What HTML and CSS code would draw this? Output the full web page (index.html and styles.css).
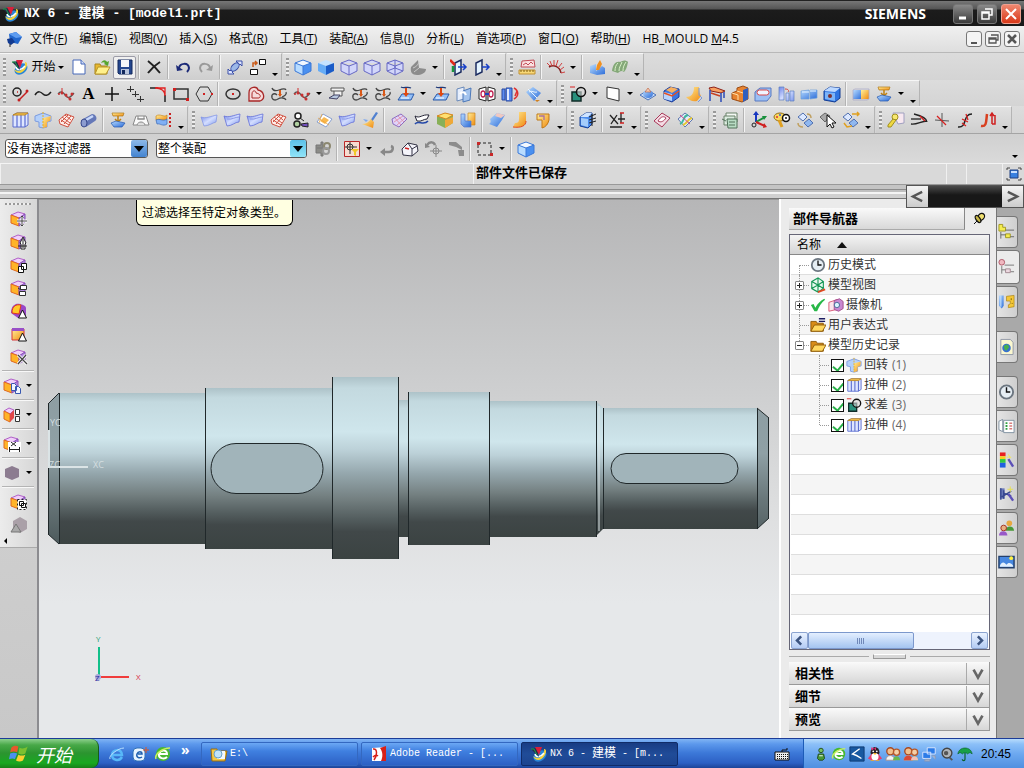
FILE: index.html
```html
<!DOCTYPE html>
<html lang="zh-CN">
<head>
    <meta charset="UTF-8">
    <meta name="viewport" content="width=device-width, initial-scale=1.0">
    <title>NX 6 - 建模 - [model1.prt]</title>
    <link rel="stylesheet" href="styles.css">
</head>
<body>
    <!-- icon sprite -->
    <svg class="sprite" aria-hidden="true">
        <defs>
            <linearGradient id="gBlue" x1="0" y1="0" x2="1" y2="1"><stop offset="0" stop-color="#b8dcff"/><stop offset="1" stop-color="#2c6cd8"/></linearGradient>
            <linearGradient id="gLilac" x1="0" y1="0" x2="1" y2="1"><stop offset="0" stop-color="#6f86e8"/><stop offset=".5" stop-color="#d4deff"/><stop offset="1" stop-color="#7e98ec"/></linearGradient>
            <linearGradient id="gGold" x1="0" y1="0" x2="1" y2="1"><stop offset="0" stop-color="#fff09a"/><stop offset="1" stop-color="#f08a10"/></linearGradient>
            <linearGradient id="gShaft" x1="0" y1="0" x2="0" y2="1">
                <stop offset="0" stop-color="#adc2c8"/><stop offset=".06" stop-color="#c3d9df"/><stop offset=".3" stop-color="#cfe6ec"/>
                <stop offset=".4" stop-color="#bcd1d8"/><stop offset=".53" stop-color="#95a7ad"/><stop offset=".67" stop-color="#748081"/>
                <stop offset=".78" stop-color="#535d5e"/><stop offset=".85" stop-color="#414849"/><stop offset="1" stop-color="#3b4342"/>
            </linearGradient>
            <linearGradient id="gEnd" x1="0" y1="0" x2="0" y2="1"><stop offset="0" stop-color="#8d9da2"/><stop offset=".4" stop-color="#8fa0a5"/><stop offset=".7" stop-color="#69777a"/><stop offset="1" stop-color="#4d5a5c"/></linearGradient>
        </defs>

        <symbol id="nx" viewBox="0 0 18 18"><ellipse cx="10" cy="11" rx="7" ry="5" fill="#2a86d8" transform="rotate(-35 10 11)"/><path d="M3 11c2 5 8 6 12-1 2-4 1-6-1-6 1 3-2 8-6 9-2 0-4-1-5-2z" fill="#f5d33a"/><path d="M5 9c1 4 6 3 9-1" stroke="#fff" fill="none" stroke-width="1.5"/><path d="M1 4l6-1 2 9z" fill="#222a48"/><path d="M5 2l7 0-3 8z" fill="#d81f3a"/><path d="M1 4l3 0 3 6" stroke="#1ba04a" fill="none"/></symbol>
        <symbol id="part" viewBox="0 0 18 18"><path d="M3 4l7-2 6 5-4 7-8-2z" fill="#2266cc"/><path d="M3 4l7-2 6 5-6 1z" fill="#5e9cf0"/><path d="M1 9l5-1 3 4-4 3-3-2z" fill="#123a90"/><path d="M4 14v3" stroke="#222"/></symbol>
        <symbol id="new" viewBox="0 0 18 18"><path d="M3 2h8l4 4v10H3z" fill="#fff" stroke="#4668b8"/><path d="M11 2v4h4" fill="#cfdcf8" stroke="#4668b8"/></symbol>
        <symbol id="open" viewBox="0 0 18 18"><path d="M2 6h5l1 2h6v8H2z" fill="#e8b830" stroke="#a8841c"/><path d="M2 16l3-7h12l-4 7z" fill="#fff08a" stroke="#b8962a"/><path d="M8 5c2-4 5-3 6-1l2-1-1 5-4-2 1-1c-1-1-2-1-4 0z" fill="#55a52c"/></symbol>
        <symbol id="save" viewBox="0 0 18 18"><path d="M2 2h14v14H3l-1-1z" fill="#24468e" stroke="#12285c"/><path d="M5 2h8v7H5z" fill="#f4f6fa"/><path d="M5 11h8v5H5z" fill="#b8c4dc"/><path d="M6 12h3v4H6z" fill="#12285c"/></symbol>
        <symbol id="del" viewBox="0 0 18 18"><path d="M3 3c4 3 8 7 12 12M15 4C10 7 6 11 3 15" stroke="#222" stroke-width="2" fill="none"/></symbol>
        <symbol id="undo" viewBox="0 0 18 18"><path d="M5 10c1-5 9-6 10 0 0 2-1 3-2 4" stroke="#1c2a78" stroke-width="2" fill="none"/><path d="M2 7l1 6 6-1z" fill="#1c2a78"/></symbol>
        <symbol id="redo" viewBox="0 0 18 18"><path d="M13 10c-1-5-9-6-10 0 0 2 1 3 2 4" stroke="#9a9a9a" stroke-width="2" fill="none"/><path d="M16 7l-1 6-6-1z" fill="#9a9a9a"/></symbol>
        <symbol id="orient" viewBox="0 0 18 18"><path d="M2 16V11l2 2 8-8-2-2h6v5l-2-2-8 8 2 2z" fill="#dfe6ff" stroke="#3a4ea8"/><ellipse cx="9" cy="9" rx="3" ry="5" transform="rotate(45 9 9)" fill="#9cb8e8" stroke="#3a4ea8"/></symbol>
        <symbol id="swap" viewBox="0 0 18 18"><path d="M10.5 1.5h6v5h-6zM1.5 11.5h7v5h-7z" fill="#fff" stroke="#111"/><path d="M4 9V5h4M6 3l2 2-2 2" fill="none" stroke="#c85a18" stroke-width="1.5"/></symbol>
        <symbol id="cube" viewBox="0 0 18 18"><path d="M1 5l8-3 8 3-8 3z" fill="#f2f8ff"/><path d="M1 5l8 3v9l-8-4z" fill="#b8dcff"/><path d="M9 8l8-3v8l-8 4z" fill="#4a90f0"/><path d="M1 5l8-3 8 3v8l-8 4-8-4zM1 5l8 3 8-3M9 8v9" fill="none" stroke="#3a78d8"/></symbol>
        <symbol id="cube2" viewBox="0 0 18 18"><path d="M1 5l8-3 8 3-8 3z" fill="#c4e2ff"/><path d="M1 5l8 3v9l-8-4z" fill="#66acf6"/><path d="M9 8l8-3v8l-8 4z" fill="#1a5cc8"/></symbol>
        <symbol id="wire" viewBox="0 0 18 18"><path d="M1 5l8-3 8 3v8l-8 4-8-4zM1 5l8 3 8-3M9 8v9" fill="#d2d6fa" stroke="#6668c4"/></symbol>
        <symbol id="wire2" viewBox="0 0 18 18"><path d="M1 5l8-3 8 3v8l-8 4-8-4zM1 5l8 3 8-3M9 8v9M9 2v8M1 13l8-3 8 3" fill="#d2d6fa" stroke="#6668c4"/></symbol>
        <symbol id="plane" viewBox="0 0 18 18"><path d="M2 9l7-7 1 8 7 1c0 4-5 6-9 6-5 0-7-3-6-8z" fill="#8c8c8c"/><path d="M4 10c3-1 5-3 6-6M10 10l-5 4" stroke="#c8c8c8" fill="none"/></symbol>
        <symbol id="door" viewBox="0 0 18 18"><path d="M3 5l6-3v12l-6 3z" fill="#e4f4ff" stroke="#1c2c60" stroke-width="1.5"/><path d="M9 9h7M13 6l3 3-3 3" stroke="#1840c8" fill="none" stroke-width="1.5"/></symbol>
        <symbol id="door2" viewBox="0 0 18 18"><path d="M5 5l6-3v12l-6 3z" fill="#e4f4ff" stroke="#1c2c60" stroke-width="1.5"/><path d="M8 9h8M13 6l3 3-3 3" stroke="#1840c8" fill="none" stroke-width="1.5"/><path d="M0 2l5 5" stroke="#e02818" stroke-width="2.5"/><path d="M3 8v6" stroke="#18963c" stroke-width="2.5"/></symbol>
        <symbol id="ruler" viewBox="0 0 18 18"><path d="M4 3l12-1 1 7H3z" fill="#fbe0e0" stroke="#c04c58"/><path d="M5 7l3-2 2 2 3-3 2 2" fill="none" stroke="#c04c58"/><path d="M1 12h16v4H1z" fill="#f8d878" stroke="#c09030"/><path d="M3 12v2M6 12v2M9 12v2M12 12v2M15 12v2" stroke="#806010"/></symbol>
        <symbol id="comb" viewBox="0 0 18 18"><path d="M2 9c5-3 11 0 12 6" fill="none" stroke="#802020" stroke-width="1.5"/><path d="M3 8L0 5M5 8L3 3M7 8V2M9 8l2-6M11 10l4-5M13 12l4-3M14 15l4-1" stroke="#d04040"/></symbol>
        <symbol id="bucket" viewBox="0 0 18 18"><path d="M2 8l6-2v7l6-5 3 2v6l-8 1-7-2z" fill="url(#gBlue)"/><path d="M9 7l3-5 2 4-3 6-3 0z" fill="#f09020"/></symbol>
        <symbol id="zebra" viewBox="0 0 18 18"><path d="M1 13c1-7 4-10 8-9 3-2 6-2 8 0-1 5-2 8-4 10-2-2-4-1-6 1-2-1-4-1-6-2z" fill="#84a878"/><path d="M4 13c0-4 1-6 3-8M8 13c0-4 2-6 3-9M12 13c0-4 1-6 3-9" fill="none" stroke="#d8f0c8"/></symbol>

        <symbol id="circline" viewBox="0 0 18 18"><circle cx="6" cy="7" r="4" fill="none" stroke="#222" stroke-width="1.5"/><path d="M6 7h1M8 15l8-8" stroke="#c42020" stroke-width="1.5"/><circle cx="8" cy="15" r="1.5" fill="#c42020"/><circle cx="16" cy="6" r="1.5" fill="#c42020"/></symbol>
        <symbol id="wave" viewBox="0 0 18 18"><path d="M1 10c3-5 6-3 8-1s5 2 8-2" fill="none" stroke="#222" stroke-width="1.5"/></symbol>
        <symbol id="spline" viewBox="0 0 18 18"><path d="M1 9c3-4 5-2 8 2s6-1 8-3" fill="none" stroke="#555" stroke-width="1.3"/><path d="M5 3v5M9 11l4 3" stroke="#d03030"/><g fill="#c83030"><circle cx="5" cy="8" r="1.5"/><circle cx="9" cy="10" r="1.5"/><circle cx="15" cy="9" r="1.5"/><circle cx="13" cy="14" r="1.5"/><circle cx="2" cy="9" r="1"/></g></symbol>
        <symbol id="plus" viewBox="0 0 18 18"><path d="M9 2v14M2 9h14" stroke="#111" stroke-width="1.5"/></symbol>
        <symbol id="pluses" viewBox="0 0 18 18"><path d="M4.5 1v6M1 4.5h7M9.5 6v6M6 9.5h7M14.5 11v6M11 14.5h7" stroke="#333"/></symbol>
        <symbol id="fillet" viewBox="0 0 18 18"><path d="M1 3h6M16 10v7" stroke="#222" stroke-width="1.5"/><path d="M6 3c6 0 10 3 10 8M7 3h9v7" stroke="#e02020" fill="none" stroke-width="1.3"/></symbol>
        <symbol id="rect" viewBox="0 0 18 18"><path d="M2 4h14v10H2z" fill="none" stroke="#333" stroke-width="1.5"/><path d="M1 3h3v3H1zM14 13h3v3h-3z" fill="#d02020"/></symbol>
        <symbol id="hex" viewBox="0 0 18 18"><path d="M5 2h8l4 7-4 7H5L1 9z" fill="none" stroke="#333"/><path d="M8 8h2v2H8zM16 8h2v2h-2z" fill="#d02020"/></symbol>
        <symbol id="ellipse" viewBox="0 0 18 18"><ellipse cx="9" cy="9" rx="7" ry="5" fill="none" stroke="#333" stroke-width="1.5"/><path d="M8 8h2v2H8z" fill="#d02020"/></symbol>
        <symbol id="offset" viewBox="0 0 18 18"><path d="M2 15V8c0-7 8-7 9-3 6 1 8 9 2 11H2z" fill="#f6dada" stroke="#a82828" stroke-width="1.3"/><path d="M5 13V9c0-4 4-4 4-1 5 1 5 4 3 5z" fill="none" stroke="#a82828"/></symbol>
        <symbol id="hook" viewBox="0 0 18 18"><path d="M2 3c1 3 4 3 7 2s6-2 7 0M2 10c-1 5 3 6 6 4s7-1 8 1" fill="none" stroke="#444" stroke-width="1.3"/><path d="M2 10c2-2 4-1 5 0M12 12c3-1 5-3 4-5" fill="none" stroke="#444" stroke-width="1.3"/><path d="M10 5v6" stroke="#d85818" stroke-width="2"/><path d="M8 9h4l-2 3z" fill="#d85818"/></symbol>
        <symbol id="project" viewBox="0 0 18 18"><path d="M3 3h13v3H3zM6 6v5h8V6" fill="#f2f2f2" stroke="#555"/><path d="M1 13l5-3h6l-3 4z" fill="#b8c8e0" stroke="#446"/></symbol>
        <symbol id="onface" viewBox="0 0 18 18"><path d="M1 15l4-6h12l-3 6z" fill="#94c0f8" stroke="#2858a8"/><path d="M4 2c3 2 6-1 10 1" stroke="#223a78" stroke-width="1.3" fill="none"/><path d="M9 3v6" stroke="#e04810" stroke-width="2"/><path d="M6 8h6l-3 4z" fill="#e04810"/><path d="M4 13h8" stroke="#fff"/></symbol>
        <symbol id="mirror" viewBox="0 0 18 18"><path d="M2 4l7-2v12l-7 2z" fill="#e6eefc" stroke="#6888b8"/><path d="M8 6l8-3-1 12-7 2z" fill="#a4c4ee" stroke="#4c78b8"/><path d="M5 9c2-3 5-2 6 1" fill="none" stroke="#fff" stroke-width="2"/></symbol>
        <symbol id="panels" viewBox="0 0 18 18"><path d="M1 4l7-2v14l-7-2zM10 2l7 2v10l-7 2z" fill="#fff" stroke="#222"/><ellipse cx="5" cy="9" rx="2" ry="3" fill="none" stroke="#c02050" stroke-width="1.3"/><ellipse cx="13" cy="9" rx="2" ry="3" fill="none" stroke="#c02050" stroke-width="1.3"/><path d="M7 9h4" stroke="#2040c0" stroke-width="2"/></symbol>
        <symbol id="wrap" viewBox="0 0 18 18"><path d="M1 4h3v11H1zM5 3h6v13H5z" fill="#5c8cf0" stroke="#2848a0"/><path d="M7 4v11" stroke="#dfeaff" stroke-width="2"/><path d="M13 3c5 3 5 8 0 11M16 6l-2 5" fill="none" stroke="#e03030" stroke-width="1.5"/></symbol>
        <symbol id="gem" viewBox="0 0 18 18"><path d="M2 7l7-5 8 6-7 8z" fill="url(#gBlue)"/><path d="M5 7c3-2 5 1 8 0M4 4l9 9" stroke="#e8f4ff" fill="none"/><path d="M11 15h5l-3 2z" fill="#d08020"/></symbol>
        <symbol id="subtract" viewBox="0 0 18 18"><path d="M3 7h9v9H3z" fill="#28907c" stroke="#102c28" stroke-width="1.5"/><circle cx="12" cy="7" r="4.5" fill="#d8d8d8" fill-opacity=".6" stroke="#111" stroke-width="1.5"/><path d="M1 2h5" stroke="#d82020"/></symbol>
        <symbol id="quad" viewBox="0 0 18 18"><path d="M3 2l12 2v12L3 13z" fill="#fff" stroke="#333"/></symbol>
        <symbol id="boss" viewBox="0 0 18 18"><path d="M1 10l8-5 8 5-8 5z" fill="#c8daf6" stroke="#4c74b8"/><ellipse cx="9" cy="9" rx="5" ry="4" fill="url(#gBlue)"/><path d="M6 7l3-4 3 4z" fill="#f4c8b0" stroke="#b85a38" stroke-width=".6"/></symbol>
        <symbol id="slot" viewBox="0 0 18 18"><path d="M2 6l6-4 9 2v8l-7 5-8-3z" fill="#3d76e0" stroke="#1c3c98"/><path d="M2 7l8 2v7l-8-2z" fill="#b8d4fc"/><path d="M4 5l5-3 7 2-6 4z" fill="#f8b060"/><path d="M2 8l8 3 7-5" stroke="#e85020" fill="none" stroke-width="1.5"/></symbol>
        <symbol id="bend" viewBox="0 0 18 18"><path d="M9 2h5c0 5 1 7 2 9l-4 5c-5 1-8-1-11-4 5 0 8-3 8-10z" fill="url(#gGold)"/><path d="M14 3v7l3 3-4 4" stroke="#7c98d8" fill="none"/></symbol>
        <symbol id="frame" viewBox="0 0 18 18"><path d="M1 3l5-1 11 4-4 2-10-2z" fill="#f8a060" stroke="#8c2018"/><path d="M2 5v11M13 8v9M16 7v6" stroke="#2c4cb8" stroke-width="1.5"/><path d="M3 8l9 3" stroke="#c84020" stroke-width="1.5"/></symbol>
        <symbol id="block" viewBox="0 0 18 18"><path d="M1 8l5-2V3l6-2 5 2v11l-6 3-10-3z" fill="#e88430" stroke="#9c4c14"/><path d="M12 5l5-2v11l-5 3z" fill="#2f5fc0"/><path d="M1 8l6 2v5M6 6l6 2" fill="none" stroke="#ffe0a8"/></symbol>
        <symbol id="pocket" viewBox="0 0 18 18"><path d="M1 7l5-4h11v8l-4 5H1z" fill="#9cc0f4" stroke="#5878c0"/><rect x="3" y="5" width="12" height="5" rx="2.5" fill="#f0f4ff" stroke="#d84848"/></symbol>
        <symbol id="ribs" viewBox="0 0 18 18"><path d="M2 2h5v13H2zM9 8h3v8H9zM13 6h4v10h-4z" fill="url(#gLilac)" stroke="#5c80c0" stroke-width=".7"/><path d="M8 4c4 0 4 2 3 3" stroke="#d04040" fill="none"/></symbol>
        <symbol id="pads" viewBox="0 0 18 18"><path d="M1 6l8-1v9H1zM10 5h7v8l-7 1z" fill="url(#gBlue)" stroke="#6fa0dc" stroke-width=".7"/><path d="M2 7h7M10 6h6" stroke="#e8f4ff"/></symbol>
        <symbol id="hole" viewBox="0 0 18 18"><path d="M1 6l6-4 10 1v10l-5 4-11-2z" fill="#2f74e0" stroke="#123c94"/><path d="M1 6l6-4 10 1-5 4z" fill="#bcd8ff"/><path d="M2 7l10 1v8l-10-2z" fill="#7cb4f8"/><circle cx="7" cy="11" r="2" fill="#7c3030"/></symbol>
        <symbol id="unite" viewBox="0 0 18 18"><path d="M1 5h9v9H1z" fill="url(#gBlue)"/><path d="M9 5h8v9H9z" fill="url(#gGold)"/><path d="M1 5l2-1h14v10l-2 1H1z" fill="none" stroke="#a8a8c8" stroke-width=".7"/></symbol>
        <symbol id="clamp" viewBox="0 0 18 18"><path d="M3 2h12l-1 3H4z" fill="url(#gGold)" stroke="#b07818" stroke-width=".7"/><path d="M9 5v6M6 8l3 3 3-3" stroke="#c08010" stroke-width="1.5" fill="none"/><path d="M2 12l5-2 9 2-3 4H5z" fill="url(#gBlue)" stroke="#2458b0" stroke-width=".7"/></symbol>

        <symbol id="extrude" viewBox="0 0 18 18"><path d="M2 4l4-2h11v12l-3 2H2z" fill="#dfe6ff" stroke="#5a6cd0"/><path d="M6 4v12M10 4v12M14 4v12" stroke="#5a6cd0" stroke-width="1.2"/><path d="M2 4l4-2h11l-3 2z" fill="#f8c858" stroke="#c08820"/></symbol>
        <symbol id="revolve" viewBox="0 0 18 18"><path d="M1 5l8-3 8 3v5l-4 1v5l-4 1-4-1v-5l-4-1z" fill="#b4d0fa" stroke="#7c9ce0"/><path d="M9 7l8-2-1 5-3 1v5l-4 1z" fill="url(#gGold)"/><path d="M9 1v16" stroke="#e8b020" stroke-dasharray="2 1"/></symbol>
        <symbol id="mesh" viewBox="0 0 18 18"><path d="M2 9l7-6 8 3-6 10-8-3z" fill="#fff0ec" stroke="#d05040"/><path d="M5 6l8 6M8 4l6 5M4 11l7-7M7 13l7-8M4 9l8 5" stroke="#d05040"/></symbol>
        <symbol id="tube" viewBox="0 0 18 18"><path d="M3 8l9-5c4 0 6 5 3 7l-9 6z" fill="#6578b8"/><path d="M6 9l7-4" stroke="#c8d8fa" stroke-width="2.5"/><ellipse cx="4" cy="12" rx="3" ry="4" fill="#8c9cd0" stroke="#38488c"/></symbol>
        <symbol id="scoop" viewBox="0 0 18 18"><path d="M1 14l3-9h10l3 9z" fill="#fafafa" stroke="#888"/><path d="M5 8h8M6 5v3h6V5" fill="none" stroke="#888"/><path d="M5 14c1-4 7-4 8 0" fill="#ddd" stroke="#888"/></symbol>
        <symbol id="extend" viewBox="0 0 18 18"><path d="M1 5c4-3 8 2 11-1v4c-4 3-7-1-11 1z" fill="url(#gGold)" stroke="#c88820" stroke-width=".7"/><path d="M1 9c4-2 7 2 11-1v5c-4 3-7-1-10 0z" fill="#80b0f4" stroke="#3868b8" stroke-width=".7"/><path d="M15 2v15" stroke="#c82020" stroke-width="2" stroke-dasharray="2 2"/></symbol>
        <symbol id="sheet" viewBox="0 0 18 18"><path d="M1 6c5 2 10-1 16-2l-1 7c-4 1-7 4-12 4z" fill="url(#gLilac)" stroke="#7c90e4" stroke-width=".7"/></symbol>
        <symbol id="sheet2" viewBox="0 0 18 18"><path d="M1 5c5 2 10-1 16-2l-1 8c-4 0-7 4-12 4z" fill="url(#gLilac)" stroke="#6470d8" stroke-width=".8"/><path d="M4 8c5 1 8-2 12-2" stroke="#8c98e8" fill="none"/></symbol>
        <symbol id="keys" viewBox="0 0 18 18"><circle cx="6" cy="5" r="3" fill="#fff" stroke="#222" stroke-width="1.5"/><circle cx="5" cy="13" r="3" fill="#b0d0a0" stroke="#222" stroke-width="1.5"/><path d="M8 7l4 3M9 13l7-1v4l-6-1z" fill="#7450c0" stroke="#222"/></symbol>
        <symbol id="patch" viewBox="0 0 18 18"><path d="M2 11l6-8 9 5-6 8z" fill="#fff" stroke="#88a0d0"/><path d="M5 10l4-4 5 3-4 4z" fill="#f8b850"/><path d="M3 7l11 7M7 3l-3 9" stroke="#f0a030" stroke-width=".7"/></symbol>
        <symbol id="brush" viewBox="0 0 18 18"><path d="M15 1l2 1-6 9-2-1z" fill="#5080d0"/><path d="M10 8l3 3-1 6c-4-1-7-3-11-4 4 0 7-2 9-5z" fill="url(#gGold)"/><path d="M2 8l5 1-2 2z" fill="#7ca8f0"/></symbol>
        <symbol id="grid" viewBox="0 0 18 18"><path d="M2 8l9-5 6 5-8 8-6-3z" fill="#e0d4fa" stroke="#8c6cc0"/><path d="M4 11l9-6M7 14l8-7M5 7l6 7M8 5l6 6" stroke="#e09ab0"/></symbol>
        <symbol id="ribbon" viewBox="0 0 18 18"><path d="M2 5c5 3 7-2 14-1l-2 4c-4 0-5 3-10 2z" fill="#fff" stroke="#223"/><path d="M2 13c3-4 9 2 13-3" fill="none" stroke="#2448a8" stroke-width="1.5"/></symbol>
        <symbol id="box2" viewBox="0 0 18 18"><path d="M1 5l8-3 8 2v8l-8 5-8-4z" fill="#88b058"/><path d="M1 5l8-3 8 2-7 4z" fill="#ffe070" stroke="#d88820"/><path d="M9 9l8-3v6l-8 5z" fill="#f0a838"/></symbol>
        <symbol id="cyl2" viewBox="0 0 18 18"><path d="M9 2h7v12H9z" fill="url(#gGold)" stroke="#c88820" stroke-width=".7"/><path d="M2 3h4v7h6v6H5l-3-3z" fill="url(#gBlue)" stroke="#5878c8" stroke-width=".7"/></symbol>
        <symbol id="folded" viewBox="0 0 18 18"><path d="M2 8l7-6 8 2-3 5-5 7-8-3c2-1 2-3 1-5z" fill="url(#gBlue)"/><path d="M9 2l8 2-4 3-6-2z" fill="#f0c8c0"/></symbol>
        <symbol id="ell" viewBox="0 0 18 18"><path d="M8 1h7v9c0 5-5 7-13 6l2-4c3 0 4-1 4-4z" fill="url(#gGold)"/><path d="M2 16c8 1 13-1 13-6" stroke="#e04820" fill="none"/></symbol>
        <symbol id="clip" viewBox="0 0 18 18"><path d="M3 3h12v6c-1 4-3 7-7 8V9H3z" fill="url(#gGold)" stroke="#c07818"/><path d="M5 5h5v4" stroke="#a870a0" fill="none" stroke-width="1.3"/></symbol>
        <symbol id="sync" viewBox="0 0 18 18"><path d="M1 6l6-4h6v11l-4 4-8-2z" fill="#4c8cec" stroke="#123c94"/><path d="M1 6l6-4h6l-4 4z" fill="#cfe4ff"/><path d="M2 7l7 1v8l-7-2z" fill="#a4ccfa"/><path d="M10 6l7-3M10 9l7-2M10 12l7-2M13 3v12" stroke="#222"/></symbol>
        <symbol id="dims" viewBox="0 0 18 18"><path d="M2 4l8 9M9 4L3 13M2 16h12" stroke="#222" stroke-width="1.3"/><path d="M13 2v10M10 8h7" stroke="#222" stroke-width="1.3"/><path d="M12 2h4M12 12h4" stroke="#d02020" stroke-width="1.3"/></symbol>
        <symbol id="pink" viewBox="0 0 18 18"><path d="M1 10l8-8 8 5-8 9z" fill="#f4dce4" stroke="#a83858"/><path d="M5 10c3-5 6-5 8-3-2 3-5 5-8 3z" fill="#fff" stroke="#a83858"/></symbol>
        <symbol id="swirl" viewBox="0 0 18 18"><path d="M2 8l7-6 8 6-8 8z" fill="#e4ecf8" stroke="#6078b0"/><path d="M4 13c5-2 2-8 8-9" fill="none" stroke="#40b8a0" stroke-width="2"/><path d="M7 14c5-2 4-6 9-7" fill="none" stroke="#e8c830" stroke-width="2"/><path d="M4 4l10 9" stroke="#d84890"/></symbol>
        <symbol id="stack" viewBox="0 0 18 18"><path d="M5 2h11v9H5z" fill="#f4f8f4" stroke="#688068"/><path d="M3 5h11v9H3z" fill="#dcece0" stroke="#688068"/><path d="M6 8h10v9H7z" fill="#b8dcc4" stroke="#507058"/><path d="M8 11h6M8 14h6M1 8l4 2" stroke="#507058"/></symbol>
        <symbol id="axes" viewBox="0 0 18 18"><path d="M6 11V3" stroke="#1838c0" stroke-width="2"/><path d="M6 11l9-5" stroke="#18903c" stroke-width="2"/><path d="M6 11l9 4" stroke="#d02020" stroke-width="2"/><path d="M3 4l3-4 3 4z" fill="#1838c0"/><path d="M17 5l-5 0 2 4z" fill="#18903c"/><path d="M17 16l-3-4-1 5z" fill="#d02020"/><circle cx="4" cy="14" r="2" fill="none" stroke="#222"/></symbol>
        <symbol id="palette" viewBox="0 0 18 18"><ellipse cx="7" cy="6" rx="6" ry="4" fill="#f8d860" stroke="#906c18"/><circle cx="4" cy="6" r="1" fill="#e03030"/><circle cx="7" cy="4" r="1" fill="#3060e0"/><circle cx="13" cy="7" r="3.5" fill="#fff" stroke="#111" stroke-width="1.5"/><circle cx="13" cy="7" r="1" fill="#111"/><path d="M6 9l3 7" stroke="#e0a020" stroke-width="3"/></symbol>
        <symbol id="link" viewBox="0 0 18 18"><path d="M2 6l5-4 4 4-4 4z" fill="#dce8ff" stroke="#5070b0"/><path d="M8 12l5-4 4 4-5 4z" fill="#90b8f0" stroke="#5070b0"/><path d="M2 12c0 3 2 4 5 4M11 3c3 0 4 1 4 4" fill="none" stroke="#c0a060" stroke-width="1.5"/></symbol>
        <symbol id="pick" viewBox="0 0 18 18"><path d="M1 6l5-4 5 3-5 6z" fill="#a8a8a8" stroke="#666"/><path d="M8 4v12l3-3 2 4 2-1-2-4h4z" fill="#fff" stroke="#111"/></symbol>
        <symbol id="link2" viewBox="0 0 18 18"><path d="M1 6l5-4 4 4-4 4z" fill="#dce8ff" stroke="#5070b0"/><path d="M7 12l5-4 4 4-5 4z" fill="#90b8f0" stroke="#5070b0"/><path d="M10 3h7M15 1l2 2-2 2M2 12l3 4 5-1" fill="none" stroke="#e0a020" stroke-width="1.5"/></symbol>
        <symbol id="key" viewBox="0 0 18 18"><path d="M6 2h11v10l-6 1z" fill="#f8e8f0" stroke="#a0a0c0"/><circle cx="8" cy="6" r="3" fill="#f8e870" stroke="#a09020"/><path d="M6 8l-5 6v2h3l5-7z" fill="#f0d840" stroke="#a09020"/></symbol>
        <symbol id="curve" viewBox="0 0 18 18"><path d="M4 3c8 2 13 5 13 8M1 13c6 1 10-3 16-3" fill="none" stroke="#222" stroke-width="1.3"/><path d="M1 8h10" stroke="#222" stroke-width="1.3"/><path d="M10 5l5 5" stroke="#d02020" stroke-width="1.5"/></symbol>
        <symbol id="cross" viewBox="0 0 18 18"><path d="M9 2v14M2 9l14 1" stroke="#555"/><path d="M4 5l9 9" stroke="#d82020" stroke-width="1.3"/></symbol>
        <symbol id="scurve" viewBox="0 0 18 18"><path d="M2 16c10 1 4-13 14-13" fill="none" stroke="#222" stroke-width="1.5"/><path d="M6 8l6 3M10 3l2 6M6 12l4 3" stroke="#d82020" stroke-width="1.3"/></symbol>
        <symbol id="jcurve" viewBox="0 0 18 18"><path d="M2 15c6 1 5-5 6-12" fill="none" stroke="#d84020" stroke-width="2.5"/><path d="M13 3v10M11 5l2-3 2 3M13 13h3V4" fill="none" stroke="#d02020" stroke-width="1.5"/></symbol>

        <symbol id="bind" viewBox="0 0 18 18"><path d="M2 5h5V2h2v14H7v-3H2zM3 8h5" fill="#8c8c88" stroke="#777"/><circle cx="13" cy="6" r="3" fill="none" stroke="#8c8870" stroke-width="2"/><circle cx="12" cy="11" r="3" fill="none" stroke="#999" stroke-width="2"/></symbol>
        <symbol id="snap" viewBox="0 0 18 18"><path d="M1.5 1.5h15v15h-15z" fill="#f8dcd0" stroke="#b82828"/><path d="M7 2v12M2 7h12" stroke="#333"/><circle cx="7" cy="7" r="3" fill="none" stroke="#333"/><path d="M8 9h8l-3 3v4l-2-1v-3z" fill="#f0c828"/></symbol>
        <symbol id="back" viewBox="0 0 18 18"><path d="M13 6c3 1 2 6-2 6H5" fill="none" stroke="#888" stroke-width="2.5"/><path d="M7 8l-5 4 5 4z" fill="#888"/></symbol>
        <symbol id="house" viewBox="0 0 18 18"><path d="M1 9l6-6 9 2 1 6-6 5-9-1z" fill="#f4f4fa" stroke="#334"/><path d="M7 3l4 6v7M11 9l5-3" fill="none" stroke="#334"/><path d="M4 8l4 1" stroke="#d02020" stroke-width="1.5"/></symbol>
        <symbol id="rotp" viewBox="0 0 18 18"><path d="M3 5c3-4 7-3 8 0" fill="none" stroke="#888" stroke-width="2.5"/><path d="M1 3v5l5-1z" fill="#888"/><path d="M12 5v12M6 11h12" stroke="#888"/><circle cx="12" cy="11" r="3" fill="none" stroke="#888"/></symbol>
        <symbol id="hammer" viewBox="0 0 18 18"><path d="M2 2h7l6 5v3l-6-3-7-2zM11 10h6v6h-5z" fill="#8c8c8c"/></symbol>
        <symbol id="marquee" viewBox="0 0 18 18"><path d="M2 3h13v12H2z" fill="none" stroke="#222" stroke-dasharray="3 2"/><path d="M1 2h3v3H1zM14 13h3v3h-3z" fill="#c82828"/></symbol>
        <symbol id="full" viewBox="0 0 18 18"><path d="M5 5h8v8H5z" fill="#3880e0" stroke="#204080"/><path d="M6 6h6v2H6z" fill="#c8e0ff"/><path d="M2 5V3h3M13 3h3v2M16 13v2h-3M5 15H2v-2" fill="none" stroke="#444"/></symbol>

        <symbol id="ocube" viewBox="0 0 18 18"><path d="M1 5l7-3 7 2-6 4z" fill="#f0d0fa" stroke="#b060c8"/><path d="M1 5l8 3v8l-8-3z" fill="#ffb428" stroke="#e06820"/><path d="M9 8l6-4v8l-6 4z" fill="#b088e0" stroke="#8850b8"/></symbol>
        <symbol id="o1" viewBox="0 0 18 18"><use href="#ocube"/><path d="M12 6v10M7 11h10" stroke="#fff" stroke-width="3"/><path d="M12 6v10M7 11h10M10.5 7.5l1.5-1.5 1.5 1.5M10.5 14.5l1.5 1.5 1.5-1.5" stroke="#444" fill="none"/></symbol>
        <symbol id="o2" viewBox="0 0 18 18"><use href="#ocube"/><path d="M13 4l3 6-1 1v5h-4v-5l-1-1z" fill="#fff" stroke="#222"/><path d="M13 6v9M8 13h9" stroke="#222"/></symbol>
        <symbol id="o3" viewBox="0 0 18 18"><use href="#ocube"/><path d="M11.5 7.5h5v6h-5zM8.5 10.5h5v6h-5z" fill="#fff" stroke="#111"/></symbol>
        <symbol id="o4" viewBox="0 0 18 18"><use href="#ocube"/><path d="M10.5 6.5h6v4h-6zM9.5 12.5h6v4h-6z" fill="#fff" stroke="#333"/><path d="M8 9l3 2" stroke="#333"/></symbol>
        <symbol id="o5" viewBox="0 0 18 18"><path d="M1 11c0-8 5-10 9-9s6 2 6 4v8l-8 2z" fill="#9848c8"/><path d="M2 11c0-7 4-9 9-8l-2 9z" fill="#ffc828" stroke="#e03820"/><path d="M12.5 8l4 8h-8z" fill="#fff" stroke="#111"/></symbol>
        <symbol id="o6" viewBox="0 0 18 18"><path d="M2 4h12v11H2z" fill="url(#gGold)" stroke="#d83838"/><path d="M2 3h12v3H2z" fill="#9850c8"/><path d="M12.5 8l4 8h-8z" fill="#fff" stroke="#111"/></symbol>
        <symbol id="o7" viewBox="0 0 18 18"><use href="#ocube"/><path d="M8 7l9 9M16 7l-8 9" stroke="#fff" stroke-width="3"/><path d="M8 7l9 9M16 7l-8 9" stroke="#444" stroke-width="1.3"/></symbol>
        <symbol id="o8" viewBox="0 0 18 18"><use href="#ocube"/><path d="M8.5 6.5h3l2 2v5h-5zM12.5 9.5h3l2 2v5h-5z" fill="#eef4ff" stroke="#3858b0"/></symbol>
        <symbol id="o9" viewBox="0 0 18 18"><path d="M1 5l5-3 5 2-4 4z" fill="#f0d0fa" stroke="#b060c8"/><path d="M1 5l6 3v8l-6-3z" fill="#ffb428" stroke="#e06820"/><path d="M7 8l4-4v8l-4 4z" fill="#e04848"/><path d="M12.5 3.5h4v5h-4zM12.5 10.5h4v5h-4z" fill="#fff" stroke="#333"/></symbol>
        <symbol id="o10" viewBox="0 0 18 18"><use href="#ocube"/><path d="M5 7h13v10H5z" fill="#fff"/><path d="M8 7l5 4M13 7l-5 4M6.5 12v5M16.5 12v5M6 14.5h11" stroke="#222" fill="none"/></symbol>
        <symbol id="o11" viewBox="0 0 18 18"><path d="M2 5l7-3 7 3v8l-7 3-7-3z" fill="#8c7c90"/></symbol>
        <symbol id="o12" viewBox="0 0 18 18"><use href="#ocube"/><path d="M7.5 6.5h9v10h-9z" fill="#fff" stroke="#222" stroke-dasharray="2 2"/><path d="M9.5 8.5h4v4h-4zM11.5 10.5h4v4h-4z" fill="none" stroke="#111"/></symbol>
        <symbol id="o13" viewBox="0 0 18 18"><path d="M3 5l7-4 7 4v8l-7 4-7-4z" fill="#aaa0a8"/><path d="M6 8l5 8H1z" fill="#aaa" stroke="#777"/></symbol>

        <symbol id="clock" viewBox="0 0 18 18"><circle cx="9" cy="9" r="7" fill="#e6eef4" stroke="#6c7680" stroke-width="2"/><path d="M9 4v5h4" fill="none" stroke="#111" stroke-width="1.5"/></symbol>
        <symbol id="views" viewBox="0 0 18 18"><path d="M2 5l7-4 6 4v8l-6 4-7-4zM2 5l7 4 6-4M9 9v8M9 1v8l-7 4M9 9l6 4" fill="#e8faf0" stroke="#189858" stroke-width="1.3"/><path d="M9 17l8-3" stroke="#e04820" stroke-width="2"/></symbol>
        <symbol id="camera" viewBox="0 0 18 18"><path d="M1 6l9-3v11l-9 2z" fill="#fbe4ec" stroke="#d85070"/><path d="M7 4l6-2 4 3v8l-5 3-5-2z" fill="#c888d0" stroke="#a04888"/><circle cx="10" cy="9" r="3" fill="#d8f4ff" stroke="#406090"/></symbol>
        <symbol id="tick" viewBox="0 0 18 18"><path d="M1 9l3-1 2 4c3-5 6-8 10-10l1 1c-4 3-7 8-9 13H5z" fill="#28b848"/></symbol>
        <symbol id="folder" viewBox="0 0 18 18"><path d="M1 5h6l1 2h7v9H1z" fill="#d88c18" stroke="#8c5808"/><path d="M1 16l4-7h13l-4 7z" fill="#ffd860" stroke="#8c5808"/></symbol>
        <symbol id="efolder" viewBox="0 0 18 18"><use href="#folder"/><path d="M10 2h7M10 5h7" stroke="#1c1c60" stroke-width="1.5"/></symbol>
        <symbol id="pin" viewBox="0 0 18 18"><ellipse cx="11" cy="7" rx="4" ry="3" transform="rotate(-45 11 7)" fill="#f0e070" stroke="#111" stroke-width="1.3"/><ellipse cx="8" cy="9" rx="2" ry="4" transform="rotate(-35 8 9)" fill="#c8b848" stroke="#111" stroke-width="1.3"/><path d="M7 11l-3 3" stroke="#111"/></symbol>

        <symbol id="t1" viewBox="0 0 18 18"><path d="M1 1h4v3h3v4H1zM8 11h5v4H8z" fill="#f4ec50" stroke="#a09820"/><path d="M8 7h9M3 9v7M3 12h5M13 14h4" stroke="#666" fill="none"/></symbol>
        <symbol id="t2" viewBox="0 0 18 18"><ellipse cx="4" cy="4" rx="3" ry="3" fill="#f0b8c0" stroke="#b05868"/><path d="M7 7h10M4 8v8M4 12h5M13 14h4" stroke="#777" fill="none"/><path d="M8 11h5v4H8z" fill="#ecd8e0" stroke="#a08890"/></symbol>
        <symbol id="t3" viewBox="0 0 18 18"><path d="M1 2h5v11l-2 3-3-3z" fill="url(#gBlue)"/><path d="M9 3l8-1v12l-6 1v-3l2-1V8H9z" fill="#f4c838" stroke="#a88010" stroke-width=".7"/><path d="M14 5v2M15 10v1" stroke="#806008"/><path d="M3 2v12" stroke="#c8e4ff"/></symbol>
        <symbol id="t4" viewBox="0 0 18 18"><path d="M3 1h10l3 3v13H3z" fill="#fbf8d0" stroke="#9098a8"/><circle cx="9" cy="10" r="4.5" fill="#3870d0"/><path d="M6 8l4-2 2 3-3 4-2-1z" fill="#48b050"/></symbol>
        <symbol id="t6" viewBox="0 0 18 18"><path d="M1 4l4-2v13l-4-2zM6 3h11v13H6z" fill="#fff" stroke="#8090a0"/><path d="M8 6h2M8 9h2M8 12h2" stroke="#30a040" stroke-width="2"/><path d="M12 6h3M12 9h3M12 12h3" stroke="#c03030"/></symbol>
        <symbol id="t7" viewBox="0 0 18 18"><path d="M2 1h6v4H2z" fill="#e82020"/><path d="M2 5h6v3H2z" fill="#f8d020"/><path d="M2 8h6v4H2z" fill="#30c840"/><path d="M2 12h6v5H2z" fill="#2060e0"/><path d="M11 8l5 8" stroke="#5c50b8" stroke-width="2.5"/><path d="M11 3l2 4M9 6h5" stroke="#f0e858"/></symbol>
        <symbol id="t8" viewBox="0 0 18 18"><path d="M2 3h5v11H2z" fill="#6878b8"/><path d="M3 3v12M6 5v9M4 12l10-6M6 8l8 3" stroke="#384890" stroke-width="1.5"/><path d="M11 9l5 7" stroke="#5c50b8" stroke-width="2.5"/><path d="M13 1v6M10 4h6" stroke="#e8e050"/></symbol>
        <symbol id="people" viewBox="0 0 18 18"><circle cx="12" cy="4" r="3" fill="#e8a840"/><path d="M8 12c0-6 9-6 9 0z" fill="#489838"/><circle cx="6" cy="9" r="3" fill="#e8b080" stroke="#a03020"/><path d="M1 17c0-6 9-6 9 0z" fill="#9858c8"/></symbol>
        <symbol id="pic" viewBox="0 0 18 18"><path d="M1 3h16v12H1z" fill="#4888e0" stroke="#24406c" stroke-width="1.5"/><path d="M2 13c2-5 5-4 7-1 2-3 5-2 7 1v1H2z" fill="#e4f0fc"/><circle cx="14" cy="5" r="2" fill="#fff040"/></symbol>

        <symbol id="win" viewBox="0 0 18 18"><path d="M2 4c2-2 4-2 6-1L7 8c-2-1-4-1-6 0z" fill="#e8582c"/><path d="M9 4c2 1 4 1 7-1l-2 6c-2 1-4 1-6 0z" fill="#7cc030"/><path d="M1 9c2-1 4-1 6 0l-2 5c-1-1-3-1-5 0z" fill="#4c90f0"/><path d="M8 10c2 1 4 1 6 0l-2 5c-2 1-4 1-6 0z" fill="#fcd030"/></symbol>
        <symbol id="ie" viewBox="0 0 18 18"><path d="M14 12c-3 5-10 3-10-2 0-6 10-7 10 0H5" fill="none" stroke="#58b8f8" stroke-width="2.5"/><path d="M2 14c-2-3 8-11 14-11" stroke="#b8e0ff" fill="none"/></symbol>
        <symbol id="outlook" viewBox="0 0 18 18"><rect x="2" y="3" width="12" height="13" rx="4" fill="#e8f4ff" stroke="#3070b8"/><path d="M11 12c-3 2-6 0-5-3s5-3 5 0H7" fill="none" stroke="#2060b0" stroke-width="1.5"/><path d="M15 2v6M12 5h6" stroke="#d85828"/></symbol>
        <symbol id="green" viewBox="0 0 18 18"><circle cx="9" cy="9" r="7" fill="#48b830"/><path d="M13 12c-3 3-9 1-8-3s8-5 8 0H6" fill="none" stroke="#fff" stroke-width="2"/><path d="M2 14C0 9 9 3 16 3" fill="none" stroke="#c8f060" stroke-width="1.5"/></symbol>
        <symbol id="search" viewBox="0 0 18 18"><path d="M1 4h6l1 2h9l-2 10H2z" fill="#f4c848" stroke="#986c10"/><path d="M7 6h8v8H7z" fill="#f0f8ff"/><circle cx="8" cy="9" r="4" fill="#c0e4fc" stroke="#68a0c8"/></symbol>
        <symbol id="pdf" viewBox="0 0 18 18"><path d="M2 3l14-1v14H2z" fill="#fff"/><path d="M10 3l6-2v15h-5c2-4 2-9-1-13z" fill="#d82018"/><path d="M3 4c5-1 4 7 1 11M3 12c2-2 4-2 5-1" fill="none" stroke="#d82018" stroke-width="1.5"/></symbol>
        <symbol id="kbd" viewBox="0 0 18 18"><path d="M2 7h14v8H2z" fill="#eee" stroke="#111"/><path d="M4 9.5h11M4 11.5h11M4 13.5h11" stroke="#111" stroke-dasharray="1 1"/><path d="M9 7V5h5V3" fill="none" stroke="#111"/></symbol>
        <symbol id="man" viewBox="0 0 18 18"><circle cx="9" cy="5" r="2.5" fill="#78c060" stroke="#204818"/><path d="M6 9h6l1 5-2 2H7l-2-2z" fill="#489838" stroke="#204818"/><path d="M7 11h4" stroke="#fff"/></symbol>
        <symbol id="tarrow" viewBox="0 0 18 18"><path d="M1 1h16v16H1z" fill="#1858a0" stroke="#0c3870"/><path d="M12 3L4 9c4 1 7 3 10 5" fill="none" stroke="#fff" stroke-width="1.5"/></symbol>
        <symbol id="qq" viewBox="0 0 18 18"><ellipse cx="9" cy="7" rx="5" ry="6" fill="#282028"/><path d="M1 14l4-5h8l4 5-4 2H5z" fill="#e83c6c"/><ellipse cx="9" cy="12" rx="4" ry="4" fill="#fff"/><path d="M5 1l3 2-3 2zM10 1l-2 2 2 2z" fill="#f03080"/><path d="M7 8h4l-2 2zM4 16h4v1H4zM10 16h4v1h-4z" fill="#f8b020"/><circle cx="7" cy="6" r="1" fill="#fff"/><circle cx="11" cy="6" r="1" fill="#fff"/></symbol>
        <symbol id="pals" viewBox="0 0 18 18"><circle cx="6" cy="6" r="4" fill="#f0c090" stroke="#a84820" stroke-width="1.5"/><circle cx="13" cy="7" r="3.5" fill="#f4d0a8" stroke="#b85828" stroke-width="1.5"/><path d="M1 16c0-7 10-7 10 0z" fill="#f4f4f4" stroke="#a89090"/><path d="M9 16c0-6 8-6 8 0z" fill="#68b850"/></symbol>
        <symbol id="pals2" viewBox="0 0 18 18"><use href="#pals"/><path d="M1 16c0-7 10-7 10 0z" fill="#d84838"/><path d="M9 16c0-6 8-6 8 0z" fill="#f0c0b8"/></symbol>
        <symbol id="net" viewBox="0 0 18 18"><path d="M7 2h9v7H7zM2 7h9v7H2z" fill="#2c7ce8" stroke="#dfeaff"/><path d="M5 15h5v2H4zM12 11h4v4" fill="#a8b8d0" stroke="#8898b8"/></symbol>
        <symbol id="speaker" viewBox="0 0 18 18"><circle cx="9" cy="8" r="5.5" fill="#b0b4b8" stroke="#444" stroke-width="1.5"/><circle cx="8" cy="8" r="2.5" fill="#555"/><path d="M12 13l3 3" stroke="#555" stroke-width="2"/></symbol>
        <symbol id="umb" viewBox="0 0 18 18"><path d="M1 9c1-9 15-9 16 0-2-2-3-2-5 0-2-2-4-2-6 0-2-2-3-2-5 0z" fill="#18a048" stroke="#086028" stroke-width=".7"/><path d="M9 8v7c0 2-3 2-3 0" fill="none" stroke="#086028" stroke-width="1.3"/></symbol>
    </svg>

    <header class="titlebar">
        <svg class="icon"><use href="#nx"/></svg>
        <h1>NX 6 - 建模 - [model1.prt]</h1>
        <span class="brand">SIEMENS</span>
        <div class="winbtns">
            <button aria-label="最小化"><svg viewBox="0 0 18 18"><path d="M5 13h7" stroke="#fff" stroke-width="3"/></svg></button>
            <button aria-label="还原"><svg viewBox="0 0 18 18"><path d="M7 4h7v6h-3M4 7h7v7H4zM4 8h7M7 4h7" fill="none" stroke="#fff" stroke-width="1.5"/></svg></button>
            <button class="close" aria-label="关闭"><svg viewBox="0 0 18 18"><path d="M4 4l10 10M14 4L4 14" stroke="#fff" stroke-width="2"/></svg></button>
        </div>
    </header>

    <nav class="menubar">
        <svg class="icon"><use href="#part"/></svg>
        <a href="#">文件(<u>F</u>)</a>
        <a href="#">编辑(<u>E</u>)</a>
        <a href="#">视图(<u>V</u>)</a>
        <a href="#">插入(<u>S</u>)</a>
        <a href="#">格式(<u>R</u>)</a>
        <a href="#">工具(<u>T</u>)</a>
        <a href="#">装配(<u>A</u>)</a>
        <a href="#">信息(<u>I</u>)</a>
        <a href="#">分析(<u>L</u>)</a>
        <a href="#">首选项(<u>P</u>)</a>
        <a href="#">窗口(<u>O</u>)</a>
        <a href="#">帮助(<u>H</u>)</a>
        <a href="#">HB_MOULD <u>M</u>4.5</a>
        <div class="docbtns">
            <button aria-label="最小化文档"><svg viewBox="0 0 14 14"><path d="M4 11h6" stroke="#555" stroke-width="2"/></svg></button>
            <button aria-label="还原文档"><svg viewBox="0 0 14 14"><path d="M5 3h7v5h-2M3 6h7v5H3zM3 7h7" fill="none" stroke="#555" stroke-width="1.3"/></svg></button>
            <button aria-label="关闭文档"><svg viewBox="0 0 14 14"><path d="M3 3l8 8M11 3l-8 8" stroke="#555" stroke-width="2.5"/></svg></button>
        </div>
    </nav>

    <div class="toolrow" id="row1"></div>
    <div class="toolrow" id="row2"></div>
    <div class="toolrow" id="row3"></div>

    <div class="selbar">
        <div class="combo">
            <select aria-label="类型过滤器"><option>没有选择过滤器</option></select>
            <span class="arrow"></span>
        </div>
        <div class="combo wide">
            <select aria-label="选择范围"><option>整个装配</option></select>
            <span class="arrow cyan"></span>
        </div>
        <div class="seltools" id="rowSel"></div>
        <button class="more end" aria-label="工具条选项"></button>
    </div>

    <div class="cue">
        <span></span>
        <strong>部件文件已保存</strong>
        <span></span>
        <span></span>
        <button class="tool" aria-label="全屏"><svg class="icon"><use href="#full"/></svg></button>
    </div>
    <div class="strip">
        <div class="tabscroll">
            <button aria-label="向左"><svg viewBox="0 0 18 18"><path d="M13 5L5 9l8 4" fill="none" stroke="#555" stroke-width="2"/></svg></button>
            <button aria-label="向右"><svg viewBox="0 0 18 18"><path d="M5 5l8 4-8 4" fill="none" stroke="#555" stroke-width="2"/></svg></button>
        </div>
    </div>

    <main class="work">
        <aside class="leftbar" id="leftbar"></aside>

        <section class="view">
            <svg class="model" viewBox="39 200 740 538">
                <g fill="url(#gShaft)">
                    <path d="M59 393h146v151H59z"/>
                    <path d="M205 388h127v161H205z"/>
                    <path d="M398 400h10v137h-10z"/>
                    <path d="M332 377h66v182h-66z"/>
                    <path d="M408 392h81v153h-81z"/>
                    <path d="M489 401h107v136H489z"/>
                    <path d="M596 401l7 7v121l-7 7z"/>
                    <path d="M603 408h154v121H603z"/>
                </g>
                <path d="M59 393l-11 11v130l11 10zM757 408l12 10v100l-12 11z" fill="url(#gEnd)"/>
                <path d="M599 406v125" stroke="#dfeaec" stroke-opacity=".5" stroke-width="2"/>
                <g fill="none" stroke="#20282a" shape-rendering="crispEdges">
                    <path d="M48.5 404v130M59.5 393v151M205.5 388v161M332.5 377v182M398.5 377v182M408.5 392v153M489.5 392v153M596.5 401v136M603.5 408v121M757.5 408v121M768.5 418v100"/>
                </g>
                <path d="M59 393l-11 11M48 534l11 10M757 408l12 10M769 518l-12 11" stroke="#20282a" fill="none"/>
                <rect x="211" y="443.5" width="112" height="50" rx="25" fill="#a1b4ba" stroke="#20282a"/>
                <rect x="611" y="453.5" width="127" height="30" rx="15" fill="#a1b4ba" stroke="#20282a"/>
                <path d="M49 430v37h39" fill="none" stroke="#dbe4e6" stroke-width="2"/>
                <g class="wcs"><text x="50" y="426">YC</text><text x="49" y="468">ZC</text><text x="93" y="468">XC</text></g>
                <path d="M99 647v28" stroke="#12c08a" stroke-width="2"/>
                <path d="M101 677h28" stroke="#f03c3c" stroke-width="2"/>
                <circle cx="98" cy="677" r="3" fill="#a8a8d8"/>
                <g class="triad"><text x="96" y="642" fill="#189c70">Y</text><text x="136" y="680" fill="#d83048">X</text><text x="95" y="681" fill="#2828a0">Z</text></g>
            </svg>
            <div class="tip" role="tooltip">过滤选择至特定对象类型。</div>
        </section>

        <aside class="navigator">
            <div class="nav-title"><h2>部件导航器</h2><button aria-label="固定"><svg class="icon"><use href="#pin"/></svg></button></div>
            <div class="treebox">
                <div class="treehead">名称 <i></i></div>
                <ul class="tree">
                    <li><span class="branch first"></span><svg class="icon"><use href="#clock"/></svg>历史模式</li>
                    <li><span class="branch"><button aria-label="展开"></button></span><svg class="icon"><use href="#views"/></svg>模型视图</li>
                    <li><span class="branch"><button aria-label="展开"></button></span><svg class="icon"><use href="#tick"/></svg><svg class="icon"><use href="#camera"/></svg>摄像机</li>
                    <li><span class="branch"></span><svg class="icon"><use href="#efolder"/></svg>用户表达式</li>
                    <li><span class="branch last"><button class="minus" aria-label="折叠"></button></span><svg class="icon"><use href="#folder"/></svg>模型历史记录</li>
                    <li><span class="branch child"></span><label><input type="checkbox" checked><svg class="icon"><use href="#revolve"/></svg>回转 <em>(1)</em></label></li>
                    <li><span class="branch child"></span><label><input type="checkbox" checked><svg class="icon"><use href="#extrude"/></svg>拉伸 <em>(2)</em></label></li>
                    <li><span class="branch child"></span><label><input type="checkbox" checked><svg class="icon"><use href="#subtract"/></svg>求差 <em>(3)</em></label></li>
                    <li><span class="branch child last"></span><label><input type="checkbox" checked><svg class="icon"><use href="#extrude"/></svg>拉伸 <em>(4)</em></label></li>
                </ul>
                <div class="hscroll">
                    <button aria-label="向左滚动"><svg viewBox="0 0 18 18"><path d="M11 4L6 9l5 5" fill="none" stroke="#3c5480" stroke-width="3"/></svg></button>
                    <div class="thumb"></div>
                    <button aria-label="向右滚动"><svg viewBox="0 0 18 18"><path d="M7 4l5 5-5 5" fill="none" stroke="#3c5480" stroke-width="3"/></svg></button>
                </div>
            </div>
            <div class="splitter"><i></i></div>
            <button class="panel">相关性<span><svg viewBox="0 0 18 18"><path d="M4 4l5 9 5-9" fill="none" stroke="#666" stroke-width="3"/></svg></span></button>
            <button class="panel">细节<span><svg viewBox="0 0 18 18"><path d="M4 4l5 9 5-9" fill="none" stroke="#666" stroke-width="3"/></svg></span></button>
            <button class="panel">预览<span><svg viewBox="0 0 18 18"><path d="M4 4l5 9 5-9" fill="none" stroke="#666" stroke-width="3"/></svg></span></button>
        </aside>

        <nav class="restabs">
            <button aria-label="装配导航器"><svg class="icon"><use href="#t1"/></svg></button>
            <button class="on" aria-label="部件导航器"><svg class="icon"><use href="#t2"/></svg></button>
            <button aria-label="重用库"><svg class="icon"><use href="#t3"/></svg></button>
            <button class="gap" aria-label="浏览器"><svg class="icon"><use href="#t4"/></svg></button>
            <button class="gap" aria-label="历史记录"><svg class="icon"><use href="#clock"/></svg></button>
            <button aria-label="系统材料"><svg class="icon"><use href="#t6"/></svg></button>
            <button aria-label="可视化"><svg class="icon"><use href="#t7"/></svg></button>
            <button aria-label="向导"><svg class="icon"><use href="#t8"/></svg></button>
            <button aria-label="角色"><svg class="icon"><use href="#people"/></svg></button>
            <button aria-label="系统场景"><svg class="icon"><use href="#pic"/></svg></button>
        </nav>
    </main>

    <footer class="taskbar">
        <button class="start"><svg><use href="#win"/></svg>开始</button>
        <div class="quick">
            <a href="#" aria-label="Internet Explorer"><svg class="icon"><use href="#ie"/></svg></a>
            <a href="#" aria-label="Outlook"><svg class="icon"><use href="#outlook"/></svg></a>
            <a href="#" aria-label="浏览器"><svg class="icon"><use href="#green"/></svg></a>
            <b>»</b>
        </div>
        <button class="task"><svg class="icon"><use href="#search"/></svg>E:\</button>
        <button class="task"><svg class="icon"><use href="#pdf"/></svg>Adobe Reader - [...</button>
        <button class="task active"><svg class="icon"><use href="#nx"/></svg>NX 6 - <span>建模</span> - [m...</button>
        <svg class="icon kbd"><use href="#kbd"/></svg>
        <div class="tray">
            <svg class="icon"><use href="#man"/></svg><svg class="icon"><use href="#green"/></svg><svg class="icon"><use href="#tarrow"/></svg><svg class="icon"><use href="#qq"/></svg><svg class="icon"><use href="#pals"/></svg><svg class="icon"><use href="#pals2"/></svg><svg class="icon"><use href="#net"/></svg><svg class="icon"><use href="#speaker"/></svg><svg class="icon"><use href="#umb"/></svg>
            <time>20:45</time>
        </div>
    </footer>

    <script>
        // "|" separator, "v" drop-down arrow, ">" toolbar options; each string is one toolbar
        const toolbars = {
            row1: [
                'start new open save | del | undo redo | orient swap >',
                'cube cube2 wire wire wire2 plane v | door2 door >',
                'ruler | comb v | bucket zebra >'
            ],
            row2: [
                'circline wave spline text plus pluses fillet rect hex | ellipse offset hook spline v project hook hook onface v onface mirror panels wrap gem >',
                'subtract v quad v boss slot bend frame block pocket ribs pads hole | unite clamp v >'
            ],
            row3: [
                'extrude revolve mesh tube | clamp scoop extend >',
                'sheet sheet2 sheet2 mesh keys patch sheet2 brush | grid ribbon box2 cyl2 | folded ell clip >',
                'sync | dims >',
                'pink swirl >',
                'stack | axes palette link pick link2 >',
                'key curve cross scurve jcurve >'
            ],
            rowSel: ['bind | snap v back house rotp hammer | marquee v | cube'],
            leftbar: ['o1 o2 o3 o4 o5 o6 o7 | o8 v | o9 v | o10 v | o11 v | o12 o13 <']
        };

        function toolHtml(name) {
            if (name === '|') return '<i class="sep"></i>';
            if (name === 'v') return '<button class="drop" aria-label="下拉"></button>';
            if (name === '>') return '<button class="more" aria-label="工具条选项"></button>';
            if (name === '<') return '<button class="less" aria-label="工具条选项"></button>';
            if (name === 'text') return '<button class="tool letter">A</button>';
            if (name === 'start') return '<button class="tool begin"><svg class="icon"><use href="#nx"/></svg>开始<i></i></button>';
            return `<button class="tool t-${name}" aria-label="${name}"><svg class="icon"><use href="#${name}"/></svg></button>`;
        }

        for (const [id, groups] of Object.entries(toolbars)) {
            document.getElementById(id).innerHTML = groups
                .map(g => `<div class="group"><i class="grip"></i>${g.split(' ').map(toolHtml).join('')}</div>`)
                .join('');
        }
    </script>
</body>
</html>
```
FILE: styles.css
```css
* {
    box-sizing: border-box;
}
body {
    margin: 0;
    height: 100vh;
    display: flex;
    flex-direction: column;
    overflow: hidden;
    background: #d8d8d8;
    font: 12px/16px "Open Sans", "Noto Sans CJK SC", sans-serif;
    color: #000;
}
button {
    padding: 0;
    border: none;
    background: none;
    font: inherit;
    color: inherit;
}
svg {
    display: block;
    flex: none;
}
a {
    color: inherit;
    text-decoration: none;
}
.sprite {
    position: absolute;
    width: 0;
    height: 0;
}
.icon {
    width: 18px;
    height: 18px;
}

/* title and menu */
.titlebar {
    flex: none;
    display: flex;
    align-items: center;
    height: 26px;
    padding: 0 3px 0 2px;
    border-top: 1px solid #222;
    background: linear-gradient(#777 0, #555 8px, #1c1c1c 9px, #181818 100%);
    color: #fff;
}
.titlebar h1 {
    margin: 0 auto 0 4px;
    font: bold 13px/18px "Liberation Mono", "Noto Sans CJK SC", monospace;
}
.brand {
    margin-right: 27px;
    font: bold 14px/18px "Noto Sans", sans-serif;
}
.winbtns {
    display: flex;
    gap: 4px;
}
.winbtns button {
    width: 20px;
    height: 20px;
    border: 1px solid #777;
    border-radius: 3px;
    background: linear-gradient(#8a8a8a, #3a3a3a);
}
.winbtns .close {
    border-color: #f0a090;
    background: linear-gradient(#f08870, #d83818);
}
.menubar {
    flex: none;
    display: flex;
    align-items: center;
    gap: 12px;
    height: 27px;
    padding: 0 4px 0 6px;
    border-bottom: 1px solid #b8b8b8;
    background: linear-gradient(#f0f0f0, #dedede);
    white-space: nowrap;
}
.menubar .icon {
    margin-right: -6px;
}
.docbtns {
    display: flex;
    gap: 3px;
    margin-left: auto;
}
.docbtns button {
    width: 16px;
    height: 16px;
    border: 1px solid #777;
    border-radius: 3px;
    background: #f4f4f4;
}

/* toolbars */
.toolrow {
    flex: none;
    display: flex;
    height: 27px;
    overflow: hidden;
    background: linear-gradient(#dcdcdc, #d4d4d4);
}
#row2 {
    height: 26px;
}
.toolrow .group {
    flex: none;
    display: flex;
    align-items: center;
    margin-right: 1px;
    border-top: 1px solid #f6f6f6;
    border-right: 1px solid #b4b4b4;
    background: linear-gradient(#e2e2e2, #cecece);
}
.grip {
    flex: none;
    width: 3px;
    height: 18px;
    margin: 0 2px 0 3px;
    background: repeating-linear-gradient(#999 0 2px, #eee 2px 4px);
}
.tool {
    display: flex;
    align-items: center;
    justify-content: center;
    width: 23px;
    height: 23px;
}
.t-save {
    border: 1px solid #9c9ca8;
    border-radius: 2px;
    background: #f0f0f0;
}
.begin {
    width: 59px;
    gap: 2px;
}
.letter {
    font: bold 17px/20px "Liberation Serif", serif;
}
.sep {
    flex: none;
    width: 2px;
    height: 24px;
    margin: 0 2px;
    border-left: 1px solid #b4b4b4;
    border-right: 1px solid #f4f4f4;
}
.drop, .more {
    display: flex;
    justify-content: center;
    align-items: center;
    width: 12px;
    height: 22px;
}
.more {
    align-items: flex-end;
    padding-bottom: 2px;
}
.drop::before, .more::before, .begin i {
    content: "";
    border: 3px solid transparent;
    border-top-color: #000;
    border-bottom: 0;
}
.selbar {
    flex: none;
    display: flex;
    align-items: center;
    height: 30px;
    padding-left: 5px;
    border-top: 1px solid #a4a4a4;
    background: linear-gradient(#d0d0d0, #dadada);
}
.combo {
    position: relative;
    width: 143px;
    height: 19px;
    margin-right: 8px;
}
.combo.wide {
    width: 151px;
    margin-right: 4px;
}
.combo select {
    appearance: none;
    width: 100%;
    height: 19px;
    padding: 0 1px;
    border: 1px solid #555;
    border-radius: 3px;
    background: #fff;
    font: inherit;
    line-height: 16px;
}
.combo .arrow {
    position: absolute;
    top: 1px;
    right: 1px;
    width: 16px;
    height: 17px;
    padding: 6px 3px;
    border-radius: 2px;
    background: linear-gradient(#8cb8e8, #4484d0);
    pointer-events: none;
}
.combo .cyan {
    background: linear-gradient(#5cc0e8, #90e4f8);
}
.combo .arrow::before {
    content: "";
    display: block;
    border: 5px solid transparent;
    border-top: 6px solid #000;
    border-bottom: 0;
}
.seltools .group {
    display: flex;
    align-items: center;
}
.seltools .grip {
    display: none;
}
.selbar .end {
    margin-left: auto;
    margin-right: 3px;
}

/* cue and status line */
.cue {
    flex: none;
    display: grid;
    grid-template-columns: 473px 1fr 20px 36px 22px;
    height: 21px;
    border-top: 1px solid #f4f4f4;
    background: #d9d9d9;
}
.cue > * {
    height: 20px;
    border-left: 1px solid #f0f0f0;
}
.cue strong {
    padding: 0 0 0 2px;
    font-size: 13px;
}
.cue .tool {
    width: 22px;
}
.strip {
    position: relative;
    z-index: 2;
    flex: none;
    height: 15px;
    border-top: 1px solid #999;
    border-bottom: 1px solid #777;
    background: linear-gradient(#c4c4c4 0 4px, #8c8c8c 4px 5px, #c0c0c0 5px 7px, #f4f4f4 7px 9px, #d0d0d0 9px);
}
.tabscroll {
    position: absolute;
    top: 0;
    right: 0;
    display: flex;
    justify-content: space-between;
    width: 118px;
    height: 23px;
    border: 1px solid #555;
    background: linear-gradient(#4a4a4a, #181818 9px);
}
.tabscroll button {
    width: 21px;
    background: linear-gradient(#f4f4f4, #ccc);
}

/* work area */
.work {
    flex: 1;
    min-height: 0;
    display: flex;
}
.leftbar {
    flex: none;
    width: 39px;
    border-right: 2px solid #8c8c90;
    background: linear-gradient(#d8d8d8, #c8c8c8);
}
.leftbar .group {
    display: flex;
    flex-wrap: wrap;
    align-items: center;
    padding: 3px 0 1px 7px;
    border-bottom: 1px solid #aaa;
    background: linear-gradient(90deg, #ececec, #d6d6d6);
}
.leftbar .grip {
    width: 26px;
    height: 2px;
    margin: 1px 0 2px -2px;
    background: repeating-linear-gradient(90deg, #999 0 2px, #eee 2px 4px);
}
.leftbar .sep {
    width: 32px;
    height: 2px;
    margin: 2px 0 2px -5px;
    border: 0;
    border-top: 1px solid #b4b4b4;
    border-bottom: 1px solid #f8f8f8;
}
.leftbar .t-o8, .leftbar .t-o9, .leftbar .t-o10, .leftbar .t-o11 {
    width: 18px;
    margin-left: -4px;
}
.leftbar .drop {
    width: 16px;
    height: 23px;
}
.less {
    width: 100%;
    height: 10px;
    margin-left: -3px;
}
.less::before {
    content: "";
    display: block;
    width: 0;
    border: 3px solid transparent;
    border-right-color: #000;
    border-left: 0;
}
.view {
    position: relative;
    flex: 1;
    min-width: 0;
    border-top: 1px solid #999;
    background: linear-gradient(#b6b6b7, #cacbcc 30%, #dfe0e1 60%, #e6e8ea 75%);
}
.model {
    width: 100%;
    height: 100%;
}
.wcs {
    font: 9px "Open Sans", sans-serif;
    fill: #d4dee0;
}
.triad {
    font: 8px "Open Sans", sans-serif;
}
.tip {
    position: absolute;
    top: 0;
    left: 97px;
    padding: 5px 6px 4px 5px;
    border: 1px solid #000;
    border-top: 0;
    border-radius: 0 0 6px 6px;
    background: #ffffe1;
}

/* part navigator */
.navigator {
    flex: none;
    display: flex;
    flex-direction: column;
    width: 218px;
    padding: 9px 6px 7px 8px;
    border-left: 2px solid #fff;
    border-right: 1px solid #777;
    background: #ebebeb;
}
.nav-title {
    display: flex;
    height: 22px;
}
.nav-title h2 {
    width: 176px;
    margin: 0 5px 0 0;
    padding: 2px 4px;
    border-right: 1px solid #888;
    border-bottom: 1px solid #aaa;
    background: linear-gradient(#fafafa, #d8d8d8);
    font: bold 13px/16px "Open Sans", "Noto Sans CJK SC", sans-serif;
}
.treebox {
    flex: 1;
    min-height: 0;
    display: flex;
    flex-direction: column;
    width: 201px;
    margin-top: 4px;
    border: 1px solid #667;
    background: #fff;
}
.treehead {
    display: flex;
    align-items: center;
    flex: none;
    height: 20px;
    padding-left: 7px;
    border-bottom: 1px solid #888;
    background: linear-gradient(#f4f4f4, #d4d4d4);
}
.treehead i {
    margin-left: 16px;
    border: 5px solid transparent;
    border-top: 0;
    border-bottom: 6px solid #111;
}
.tree {
    flex: 1;
    min-height: 0;
    margin: 0 0 0 1px;
    padding: 0;
    list-style: none;
    color: #333;
    background: repeating-linear-gradient(#fff 0 19px, #dedede 19px 20px, #f5f5f5 20px 39px, #dedede 39px 40px);
}
.tree li, .tree label {
    display: flex;
    align-items: center;
    height: 20px;
}
.tree .icon {
    width: 16px;
    height: 16px;
    margin-right: 2px;
}
.tree em {
    margin-left: 4px;
    font-style: normal;
    color: #666;
}
.branch {
    position: relative;
    flex: none;
    width: 11px;
    height: 20px;
    margin-left: 8px;
    border-left: 1px dotted #999;
}
.branch.first {
    height: 10px;
    align-self: flex-end;
}
.branch.last {
    height: 10px;
    align-self: flex-start;
}
.branch::after {
    content: "";
    position: absolute;
    left: 0;
    top: 10px;
    width: 9px;
    border-top: 1px dotted #999;
}
.branch.first::after {
    top: 0;
}
.branch.child {
    margin-left: 28px;
    width: 12px;
}
.branch button {
    position: absolute;
    z-index: 1;
    top: 6px;
    left: -5px;
    width: 9px;
    height: 9px;
    border: 1px solid #888;
    border-radius: 1px;
    background: linear-gradient(#222, #222) center / 5px 1px no-repeat, linear-gradient(#222, #222) center / 1px 5px no-repeat, #fff;
}
.branch .minus {
    background: linear-gradient(#222, #222) center / 5px 1px no-repeat, #fff;
}
.tree input {
    appearance: none;
    position: relative;
    width: 13px;
    height: 13px;
    margin: 0 2px 0 0;
    border: 1px solid #111;
    background: #fff;
    overflow: hidden;
}
.tree input:checked::after {
    content: "";
    position: absolute;
    left: 3px;
    top: 0;
    width: 5px;
    height: 9px;
    border: solid #28b048;
    border-width: 0 2px 2px 0;
    transform: rotate(40deg);
}
.hscroll {
    flex: none;
    display: flex;
    height: 17px;
    margin: 0 1px;
    background: #eef3fd;
}
.hscroll button {
    width: 17px;
    border: 1px solid #8ca4d0;
    border-radius: 2px;
    background: linear-gradient(#eaf2ff, #b4ccf4);
}
.thumb {
    width: 106px;
    margin-right: auto;
    border: 1px solid #7c98cc;
    border-radius: 2px;
    background: repeating-linear-gradient(90deg, #7088b8 0 1px, transparent 1px 2px) center / 8px 6px no-repeat, linear-gradient(#e4efff, #a4c4f0);
}
.splitter {
    display: flex;
    align-items: center;
    flex: none;
    gap: 4px;
    width: 201px;
    height: 12px;
}
.splitter::before, .splitter::after {
    content: "";
    flex: 1;
    border-top: 1px solid #aaa;
}
.splitter i {
    width: 33px;
    height: 5px;
    border: 1px solid #999;
    border-top-color: #fff;
    background: #d8d8d8;
}
.panel {
    flex: none;
    display: flex;
    align-items: center;
    justify-content: space-between;
    width: 201px;
    height: 23px;
    padding-left: 6px;
    border-right: 1px solid #999;
    border-bottom: 1px solid #999;
    background: linear-gradient(#fafafa, #d6d6d6);
    font-size: 13px;
    font-weight: bold;
}
.panel span {
    width: 23px;
    padding: 3px 3px 2px;
    border-left: 1px solid #aaa;
}
.panel svg {
    width: 16px;
    height: 16px;
}
.restabs {
    flex: none;
    width: 27px;
    padding-top: 17px;
    background: #a9a9a9;
}
.restabs button {
    display: flex;
    align-items: center;
    width: 21px;
    height: 32px;
    margin-bottom: 2px;
    padding-left: 1px;
    border: 1px solid #777;
    border-left: 0;
    border-radius: 0 4px 4px 0;
    background: linear-gradient(90deg, #e4e4e4, #cfcfcf);
}
.restabs .on {
    width: 23px;
    height: 34px;
    background: #ebebeb;
}
.restabs .gap {
    margin-top: 13px;
}
.restabs .icon {
    width: 17px;
}

/* taskbar */
.taskbar {
    flex: none;
    display: flex;
    align-items: center;
    height: 30px;
    border-top: 1px solid #1c3c98;
    background: linear-gradient(#80b4f4 0, #5c98ec 5px, #3c78d8 14px, #2c60c4 24px, #1c4498);
    color: #fff;
    font: 10px/16px "Liberation Mono", "Noto Sans CJK SC", monospace;
}
.start {
    display: flex;
    align-items: center;
    gap: 6px;
    width: 99px;
    height: 29px;
    padding-left: 9px;
    border-right: 1px solid #185c18;
    border-radius: 0 8px 8px 0;
    background: linear-gradient(#8cd08c 0, #48a848 6px, #2c9430 14px, #18a820 24px, #188018);
    font: italic 18px/24px "Noto Sans CJK SC", sans-serif;
}
.start svg {
    width: 21px;
    height: 21px;
}
.quick {
    display: flex;
    gap: 5px;
    width: 102px;
    padding-left: 9px;
}
.quick b {
    margin-left: 4px;
    font: bold 14px/10px "Open Sans", sans-serif;
}
.task {
    display: flex;
    align-items: center;
    width: 157px;
    height: 24px;
    margin-right: 3px;
    padding-left: 8px;
    border: 1px solid #3468c0;
    border-radius: 2px;
    background: linear-gradient(#6ca8f4, #4080e0 8px, #2c60c4);
    white-space: pre;
}
.task .icon {
    margin-right: 2px;
}
.task span {
    font-size: 12px;
}
.task.active {
    background: linear-gradient(#183c84, #204c98 50%, #1c4490);
    border-color: #102c68;
}
.kbd {
    margin-left: auto;
    margin-right: 12px;
}
.tray {
    display: flex;
    align-items: center;
    height: 29px;
    padding: 0 13px 0 9px;
    border-left: 1px solid #1c5cb8;
    background: linear-gradient(#b8dcfc 0, #8cc0f8 5px, #6ca8f0 15px, #5090e0);
}
.tray .icon {
    width: 16px;
    height: 16px;
    margin-right: 2px;
}
.tray time {
    margin-left: 6px;
    color: #000;
    font: 12px/16px "Liberation Sans", sans-serif;
}
```
